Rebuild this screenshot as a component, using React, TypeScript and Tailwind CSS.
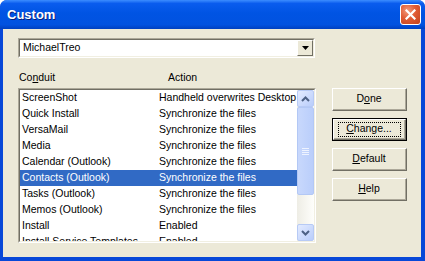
import React from 'react';

const rows: [string, string][] = [
  ['ScreenShot', 'Handheld overwrites Desktop'],
  ['Quick Install', 'Synchronize the files'],
  ['VersaMail', 'Synchronize the files'],
  ['Media', 'Synchronize the files'],
  ['Calendar (Outlook)', 'Synchronize the files'],
  ['Contacts (Outlook)', 'Synchronize the files'],
  ['Tasks (Outlook)', 'Synchronize the files'],
  ['Memos (Outlook)', 'Synchronize the files'],
  ['Install', 'Enabled'],
  ['Install Service Templates', 'Enabled'],
];

const SELECTED = 5;

// classic 3d button, the focused one gets the black outline + dotted rect
function DlgButton({ label, ul, focused }: { label: string; ul: number; focused?: boolean }) {
  const text = (
    <span>
      {label.slice(0, ul)}
      <span className="underline underline-offset-1">{label[ul]}</span>
      {label.slice(ul + 1)}
    </span>
  );
  return (
    <div className={`h-[23px] w-[75px] ${focused ? 'border border-black' : ''}`}>
      <div className="h-full w-full border-t border-l border-white border-r border-b border-r-[#716F64] border-b-[#716F64] bg-[#ECE9D8]">
        <div className="flex h-full w-full items-center justify-center border-r border-b border-r-[#ACA899] border-b-[#ACA899]">
          {focused ? (
            <div className="flex h-[15px] w-[63px] items-center justify-center border border-dotted border-black">{text}</div>
          ) : (
            text
          )}
        </div>
      </div>
    </div>
  );
}

function Chevron({ up }: { up?: boolean }) {
  return (
    <svg width="9" height="6" viewBox="0 0 9 6">
      <path
        d={up ? 'M1 5 L4.5 1.5 L8 5' : 'M1 1 L4.5 4.5 L8 1'}
        fill="none"
        stroke="#4D6185"
        strokeWidth="2"
      />
    </svg>
  );
}

export default function App() {
  return (
    <div className="h-[261px] w-[425px] bg-white font-['Liberation_Sans',Arial,sans-serif] text-[10.5px] text-black">
      <div className="flex h-full w-full flex-col rounded-t-[7px] bg-[#0848D8]">
        {/* title bar */}
        <div className="flex h-[29px] shrink-0 items-center justify-between rounded-t-[7px] bg-[linear-gradient(to_bottom,#3C8DFF_0%,#0A5CEE_12%,#0054E3_45%,#0152E0_85%,#0040C0_100%)] pl-[7px] pr-[4px]">
          <span className="text-[13px] font-bold leading-none text-white [text-shadow:1px_1px_0_#0A1E7A]">Custom</span>
          <div className="flex h-[21px] w-[21px] items-center justify-center rounded-[3px] border border-white bg-[radial-gradient(circle_at_35%_30%,#F29A7C_0%,#E05B34_45%,#C2401A_100%)]">
            <svg width="11" height="11" viewBox="0 0 11 11">
              <path d="M1.5 1.5 L9.5 9.5 M9.5 1.5 L1.5 9.5" stroke="white" strokeWidth="2.2" strokeLinecap="square" />
            </svg>
          </div>
        </div>

        {/* client area */}
        <div className="mb-[4px] ml-[3px] mr-[4px] flex flex-1 flex-col bg-[#ECE9D8] pl-[15px] pt-[9px]">
          {/* combo */}
          <div className="h-[20px] w-[297px] border-t border-l border-t-[#ACA899] border-l-[#ACA899] border-r border-b border-r-white border-b-white">
            <div className="flex h-full w-full items-center border-t border-l border-t-[#716F64] border-l-[#716F64] border-r border-b border-r-[#F1EFE2] border-b-[#F1EFE2] bg-white">
              <span className="flex-1 pl-[3px]">MichaelTreo</span>
              <div className="flex h-[16px] w-[16px] items-center justify-center border-t border-l border-white border-r border-b border-r-[#716F64] border-b-[#716F64] bg-[#ECE9D8]">
                <svg width="7" height="4" viewBox="0 0 7 4">
                  <path d="M0 0 H7 L3.5 4 Z" fill="black" />
                </svg>
              </div>
            </div>
          </div>

          <div className="flex">
            <div className="flex flex-col">
              {/* headers */}
              <div className="mt-[13px] flex h-[13px] items-center leading-none">
                <span className="w-[150px] pl-[1px]">
                  Co<span className="underline underline-offset-1">n</span>duit
                </span>
                <span>Action</span>
              </div>

              {/* list */}
              <div className="mt-[4px] h-[155px] w-[298px] border-t border-l border-t-[#ACA899] border-l-[#ACA899] border-r border-b border-r-white border-b-white">
                <div className="flex h-full w-full border-t border-l border-t-[#716F64] border-l-[#716F64] border-r border-b border-r-[#F1EFE2] border-b-[#F1EFE2] bg-white">
                  <div className="flex-1 overflow-hidden">
                    {rows.map(([name, action], i) => (
                      <div
                        key={name}
                        className={`flex h-[16px] items-center whitespace-nowrap ${i === SELECTED ? 'bg-[#316AC5] text-white' : ''}`}
                      >
                        <span className="w-[139px] pl-[2px]">{name}</span>
                        <span>{action}</span>
                      </div>
                    ))}
                  </div>

                  {/* xp scrollbar */}
                  <div className="flex w-[17px] flex-col bg-[linear-gradient(to_right,#EEEDE5,#FEFEFB)]">
                    <div className="flex h-[17px] items-center justify-center rounded-[2px] border border-[#B7CAF5] bg-[linear-gradient(to_bottom_right,#E3EBFF,#B9CDFB)]">
                      <Chevron up />
                    </div>
                    <div className="flex h-[88px] items-center justify-center rounded-[2px] border border-[#B3C8F5] bg-[linear-gradient(to_right,#C8D8FC,#BACEFB)]">
                      <div className="flex flex-col gap-[1px]">
                        <div className="h-px w-[7px] bg-[#EEF3FF]" />
                        <div className="h-px w-[7px] bg-[#EEF3FF]" />
                        <div className="h-px w-[7px] bg-[#EEF3FF]" />
                        <div className="h-px w-[7px] bg-[#EEF3FF]" />
                      </div>
                    </div>
                    <div className="flex-1" />
                    <div className="flex h-[17px] items-center justify-center rounded-[2px] border border-[#B7CAF5] bg-[linear-gradient(to_bottom_right,#E3EBFF,#B9CDFB)]">
                      <Chevron />
                    </div>
                  </div>
                </div>
              </div>
            </div>

            {/* buttons */}
            <div className="ml-[16px] mt-[30px] flex flex-col gap-[7px]">
              <DlgButton label="Done" ul={1} />
              <DlgButton label="Change..." ul={0} focused />
              <DlgButton label="Default" ul={0} />
              <DlgButton label="Help" ul={0} />
            </div>
          </div>
        </div>
      </div>
    </div>
  );
}
